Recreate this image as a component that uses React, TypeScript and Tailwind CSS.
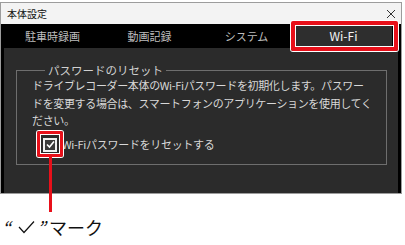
import React from "react";

const tabs = ["駐車時録画", "動画記録", "システム", "Wi-Fi"];

export default function App() {
  const active = 3;

  return (
    <div
      className="relative w-[405px] h-[245px] bg-white overflow-hidden"
      style={{ fontFamily: '"Noto Sans CJK JP", "Noto Sans", sans-serif' }}
    >
      {/* Settings window */}
      <div className="mt-[2px] w-[402px] border border-[#9c9c9c]">
        {/* Title bar */}
        <div className="h-[21px] bg-[#f3f3f3] flex items-center justify-between pl-[6px] pr-[4px]">
          <span className="text-[10px] leading-none text-[#111]">本体設定</span>
          <svg width="10" height="10" viewBox="0 0 10 10" className="mr-[1px]">
            <path d="M1 1 L9 9 M9 1 L1 9" stroke="#333" strokeWidth="1" />
          </svg>
        </div>

        {/* Tabs */}
        <div className="h-[24px] bg-black flex pl-[3px]">
          {tabs.map((t, i) => (
            <div key={t} className="w-[97px] h-full py-[1px]">
              <div
                className={
                  i === active
                    ? "h-full flex items-center justify-center bg-[#2e2e2e] text-[12px] text-[#f4f4f4]"
                    : "h-full flex items-center justify-center text-[11px] text-[#bdbdbd]"
                }
              >
                {t}
              </div>
            </div>
          ))}
        </div>

        {/* Content */}
        <div className="h-[145px] bg-[#2b2b2b] border-x-[3px] border-black pt-[15px] pl-[12px] pr-[11px]">
          <fieldset className="h-[102px] border border-[#6e6e6e] pl-[15px] pr-[6px]">
            <legend className="ml-[13px] px-[3px] text-[11.5px] leading-[14px] text-[#d0d0d0]">
              パスワードのリセット
            </legend>
            <p className="text-[11px] leading-[17.5px] tracking-[-0.35px] text-[#d8d8d8] whitespace-nowrap">
              ドライブレコーダー本体のWi-Fiパスワードを初期化します。パスワー
              <br />
              ドを変更する場合は、スマートフォンのアプリケーションを使用してく
              <br />
              ださい。
            </p>
            <div className="mt-[7px] h-[16px] flex items-center pl-[11px] gap-[5px]">
              <div className="w-[14px] h-[14px] border-[2px] border-[#f0f0f0] bg-[#3a3a3a] flex items-center justify-center">
                <svg width="9" height="9" viewBox="0 0 9 9">
                  <path d="M1 4.5 L3.5 7 L8 1.5" fill="none" stroke="#fff" strokeWidth="1.6" />
                </svg>
              </div>
              <span className="text-[11px] tracking-[-0.3px] text-[#d8d8d8]">Wi-Fiパスワードをリセットする</span>
            </div>
          </fieldset>
        </div>
      </div>

      {/* Callout label */}
      <div className="mt-[22px] pl-[2px] flex items-center h-[22px] text-[18px] leading-[22px] text-[#111]">
        <span className="w-[15px] italic">“</span>
        <span className="w-[20px] flex justify-center">
          <svg width="18" height="14" viewBox="0 0 18 14">
            <path d="M1 7 L6 12.5 L16 1.5" fill="none" stroke="#111" strokeWidth="1.2" />
          </svg>
        </span>
        <span className="w-[12px] italic">”</span>
        <span>マーク</span>
      </div>

      {/* Red annotation frames */}
      <div className="absolute left-[291px] top-[21px] w-[107px] h-[30px] rounded-[2px] border-[4px] border-[#e8101a] shadow-[0_0_0_1px_#fff,inset_0_0_0_1px_#fff]" />
      <div className="absolute left-[37px] top-[131px] w-[26px] h-[26px] rounded-[2px] border-[3px] border-[#e8101a] shadow-[0_0_0_1px_#fff,inset_0_0_0_1px_#fff]" />
      <div className="absolute left-[49px] top-[157px] w-[3px] h-[55px] bg-[#e8101a]" />
    </div>
  );
}
